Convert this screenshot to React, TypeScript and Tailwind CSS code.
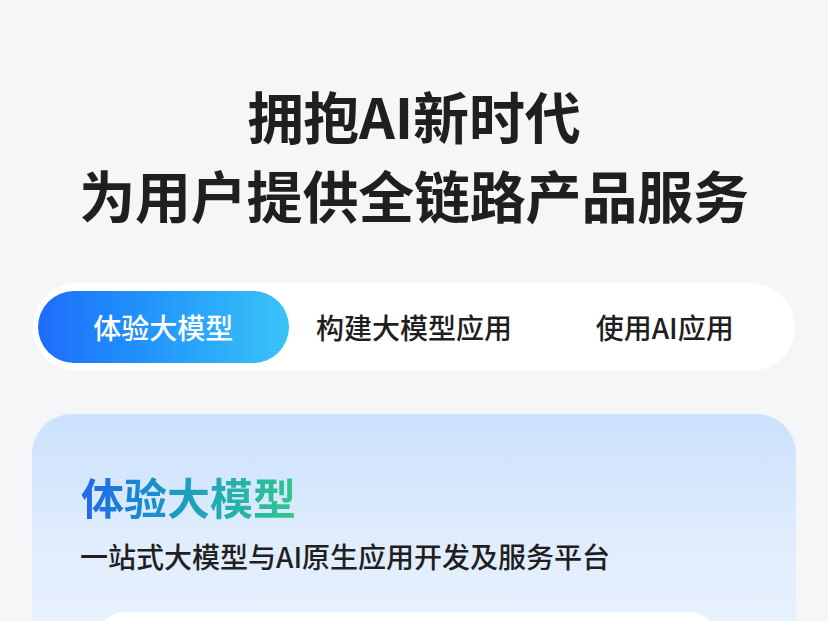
import { useState } from 'react'

const tabs = ['体验大模型', '构建大模型应用', '使用AI应用']

export default function App() {
  const [active, setActive] = useState(0)

  return (
    <div
      className="min-h-[621px] bg-[#f5f6f8] text-[#1f1f1f] overflow-hidden"
      style={{ fontFamily: '"Noto Sans CJK SC", "Noto Sans", sans-serif' }}
    >
      <h1 className="pt-[75px] text-center text-[56px] leading-[79px] font-bold tracking-[-0.2px]">
        拥抱AI新时代
        <br />
        为用户提供全链路产品服务
      </h1>

      <div className="mx-[33px] mt-[50px] flex h-[88px] rounded-full bg-white px-[5px] py-2">
        {tabs.map((t, i) => (
          <button
            key={t}
            type="button"
            onClick={() => setActive(i)}
            className={`flex-1 rounded-full text-[28px] font-medium ${
              active === i
                ? 'bg-gradient-to-r from-[#1f6cfb] to-[#3bc3f8] text-white'
                : 'text-[#1f1f1f]'
            }`}
          >
            {t}
          </button>
        ))}
      </div>

      <div className="mx-[32px] mt-[43px] h-[260px] rounded-t-[40px] bg-gradient-to-b from-[#cbe1fc] via-[#e0edfd] to-[#edf4fe] pt-[54px]">
        <h2 className="pl-[49px] text-[43px] leading-[56px] font-semibold">
          <span className="bg-gradient-to-r from-[#2466ea] via-[#1f9fbf] to-[#34c78a] bg-clip-text text-transparent">
            {tabs[active]}
          </span>
        </h2>
        <p className="mt-3 pl-[48px] text-[28px] leading-[40px] font-medium text-[#1f1f1f]">
          一站式大模型与AI原生应用开发及服务平台
        </p>
        <div className="ml-[66px] mr-[80px] mt-[36px] h-[120px] rounded-[26px] bg-white" />
      </div>
    </div>
  )
}
